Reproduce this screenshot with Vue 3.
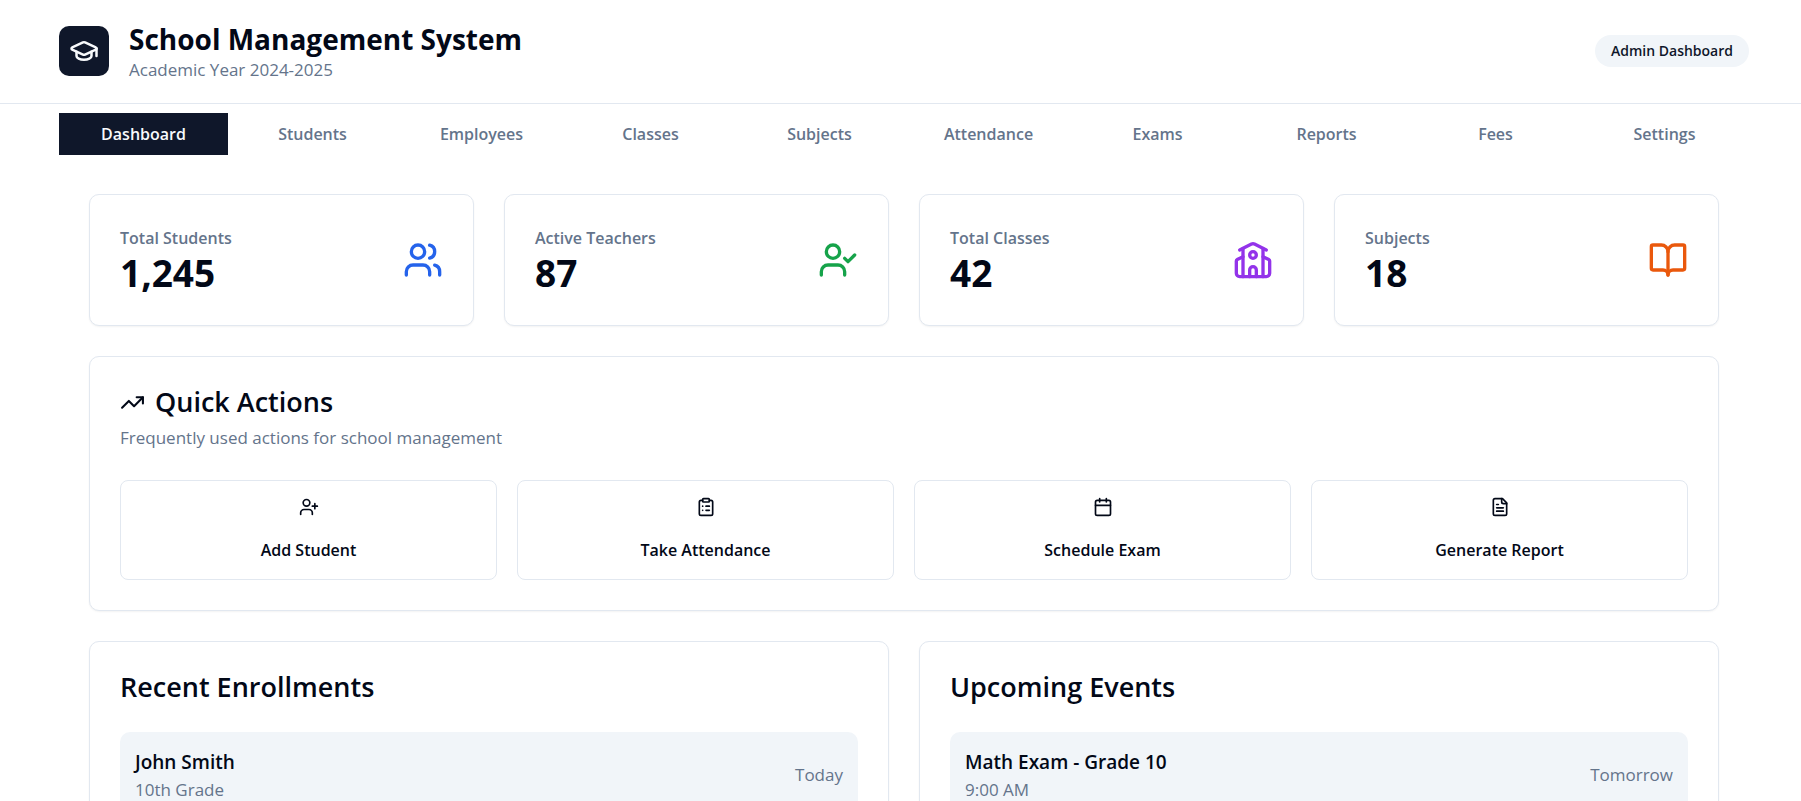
<script setup>
import { ref } from 'vue'

const tabs = ['Dashboard', 'Students', 'Employees', 'Classes', 'Subjects', 'Attendance', 'Exams', 'Reports', 'Fees', 'Settings']
const active = ref('Dashboard')

const person = '<path d="M16 21v-2a4 4 0 0 0-4-4H6a4 4 0 0 0-4 4v2"/><circle cx="9" cy="7" r="4"/>'
const icons = {
  cap: '<path d="M21.42 10.922a1 1 0 0 0-.019-1.838L12.83 5.18a2 2 0 0 0-1.66 0L2.6 9.08a1 1 0 0 0 0 1.832l8.57 3.908a2 2 0 0 0 1.66 0z"/><path d="M22 10v6"/><path d="M6 12.5V16a6 3 0 0 0 12 0v-3.5"/>',
  users: person + '<path d="M22 21v-2a4 4 0 0 0-3-3.87"/><path d="M16 3.13a4 4 0 0 1 0 7.75"/>',
  userCheck: person + '<polyline points="16 11 18 13 22 9"/>',
  userPlus: person + '<path d="M19 8v6"/><path d="M22 11h-6"/>',
  school: '<path d="M14 22v-4a2 2 0 1 0-4 0v4"/><path d="m18 10 3.447 1.724a1 1 0 0 1 .553.894V20a2 2 0 0 1-2 2H4a2 2 0 0 1-2-2v-7.382a1 1 0 0 1 .553-.894L6 10"/><path d="M18 5v17"/><path d="m4 6 7.106-3.553a2 2 0 0 1 1.788 0L20 6"/><path d="M6 5v17"/><circle cx="12" cy="9" r="2"/>',
  book: '<path d="M12 7v14"/><path d="M3 18a1 1 0 0 1-1-1V4a1 1 0 0 1 1-1h5a4 4 0 0 1 4 4 4 4 0 0 1 4-4h5a1 1 0 0 1 1 1v13a1 1 0 0 1-1 1h-6a3 3 0 0 0-3 3 3 3 0 0 0-3-3z"/>',
  trend: '<polyline points="22 7 13.5 15.5 8.5 10.5 2 17"/><polyline points="16 7 22 7 22 13"/>',
  clipboard: '<rect width="8" height="4" x="8" y="2" rx="1" ry="1"/><path d="M16 4h2a2 2 0 0 1 2 2v14a2 2 0 0 1-2 2H6a2 2 0 0 1-2-2V6a2 2 0 0 1 2-2h2"/><path d="M12 11h4"/><path d="M12 16h4"/><path d="M8 11h.01"/><path d="M8 16h.01"/>',
  calendar: '<path d="M8 2v4"/><path d="M16 2v4"/><rect width="18" height="18" x="3" y="4" rx="2"/><path d="M3 10h18"/>',
  file: '<path d="M15 2H6a2 2 0 0 0-2 2v16a2 2 0 0 0 2 2h12a2 2 0 0 0 2-2V7Z"/><path d="M14 2v4a2 2 0 0 0 2 2h4"/><path d="M10 9H8"/><path d="M16 13H8"/><path d="M16 17H8"/>',
}

const stats = [
  { label: 'Total Students', value: '1,245', icon: 'users', tone: 'blue' },
  { label: 'Active Teachers', value: '87', icon: 'userCheck', tone: 'green' },
  { label: 'Total Classes', value: '42', icon: 'school', tone: 'purple' },
  { label: 'Subjects', value: '18', icon: 'book', tone: 'orange' },
]

const actions = [
  { label: 'Add Student', icon: 'userPlus' },
  { label: 'Take Attendance', icon: 'clipboard' },
  { label: 'Schedule Exam', icon: 'calendar' },
  { label: 'Generate Report', icon: 'file' },
]

const lists = [
  { title: 'Recent Enrollments', items: [{ name: 'John Smith', detail: '10th Grade', when: 'Today' }] },
  { title: 'Upcoming Events', items: [{ name: 'Math Exam - Grade 10', detail: '9:00 AM', when: 'Tomorrow' }] },
]
</script>

<template>
  <div class="page">
    <header class="header">
      <div class="brand">
        <div class="logo"><svg class="icon icon-lg" viewBox="0 0 24 24" aria-hidden="true" v-html="icons.cap"></svg></div>
        <div>
          <h1 class="title">School Management System</h1>
          <p class="muted">Academic Year 2024-2025</p>
        </div>
      </div>
      <span class="badge">Admin Dashboard</span>
    </header>

    <nav class="tabs" aria-label="Main">
      <button
        v-for="tab in tabs"
        :key="tab"
        type="button"
        class="tab"
        :class="{ active: tab === active }"
        @click="active = tab"
      >{{ tab }}</button>
    </nav>

    <main class="content">
      <section class="stats">
        <article v-for="s in stats" :key="s.label" class="card stat">
          <div>
            <p class="stat-label">{{ s.label }}</p>
            <p class="stat-value">{{ s.value }}</p>
          </div>
          <svg class="icon icon-xl" :class="s.tone" viewBox="0 0 24 24" aria-hidden="true" v-html="icons[s.icon]"></svg>
        </article>
      </section>

      <section class="card">
        <h2 class="card-title">
          <svg class="icon icon-md" viewBox="0 0 24 24" aria-hidden="true" v-html="icons.trend"></svg>
          Quick Actions
        </h2>
        <p class="muted subtitle">Frequently used actions for school management</p>
        <div class="actions">
          <button v-for="a in actions" :key="a.label" type="button" class="action">
            <svg class="icon icon-sm" viewBox="0 0 24 24" aria-hidden="true" v-html="icons[a.icon]"></svg>
            <span>{{ a.label }}</span>
          </button>
        </div>
      </section>

      <div class="lists">
        <section v-for="l in lists" :key="l.title" class="card">
          <h2 class="card-title">{{ l.title }}</h2>
          <ul class="items">
            <li v-for="i in l.items" :key="i.name" class="item">
              <div>
                <p class="item-name">{{ i.name }}</p>
                <p class="muted">{{ i.detail }}</p>
              </div>
              <span class="muted">{{ i.when }}</span>
            </li>
          </ul>
        </section>
      </div>
    </main>
  </div>
</template>

<style>
body {
  background: #fff;
}
</style>

<style scoped>
.page {
  color: #020817;
  font-family: "Segoe UI", "Open Sans", "Noto Sans", sans-serif;
  font-size: 16px;
  line-height: 26px;
}

h1, h2, p, ul {
  margin: 0;
  padding: 0;
}

button {
  font: inherit;
  cursor: pointer;
}

.icon {
  flex: none;
  fill: none;
  stroke: currentColor;
  stroke-width: 2;
  stroke-linecap: round;
  stroke-linejoin: round;
}
.icon-sm { width: 20px; height: 20px; }
.icon-md { width: 25px; height: 25px; }
.icon-lg { width: 30px; height: 30px; }
.icon-xl { width: 40px; height: 40px; }

.blue { color: #2563eb; }
.green { color: #16a34a; }
.purple { color: #9333ea; }
.orange { color: #ea580c; }

.muted {
  color: #64748b;
  font-size: 17px;
  line-height: 24px;
}

.header {
  display: flex;
  align-items: center;
  justify-content: space-between;
  padding: 20px 52px 21px 59px;
  border-bottom: 1px solid #e2e8f0;
}

.brand {
  display: flex;
  align-items: center;
  gap: 20px;
}

.logo {
  display: flex;
  align-items: center;
  justify-content: center;
  width: 50px;
  height: 50px;
  border-radius: 10px;
  background: #0f172a;
  color: #f8fafc;
}

.title {
  font-size: 28px;
  font-weight: 700;
  line-height: 38px;
}

.badge {
  padding: 4px 16px;
  border-radius: 16px;
  background: #f1f5f9;
  color: #0f172a;
  font-size: 14px;
  font-weight: 600;
  line-height: 24px;
}

.tabs {
  display: grid;
  grid-template-columns: repeat(10, 1fr);
  padding: 9px 52px 9px 59px;
}

.tab {
  padding: 8px;
  border: 0;
  background: transparent;
  color: #64748b;
  font-weight: 600;
}

.tab.active {
  background: #0f172a;
  color: #f8fafc;
}

.content {
  display: grid;
  gap: 30px;
  padding: 30px 82px 30px 89px;
}

.card {
  padding: 30px;
  border: 1px solid #e2e8f0;
  border-radius: 10px;
  background: #fff;
  box-shadow: 0 1px 2px rgba(0, 0, 0, 0.05);
}

.stats {
  display: grid;
  grid-template-columns: repeat(4, 1fr);
  gap: 30px;
}

.stat {
  display: flex;
  align-items: center;
  justify-content: space-between;
}

.stat-label {
  color: #64748b;
  font-weight: 600;
}

.stat-value {
  font-size: 37px;
  font-weight: 700;
  line-height: 44px;
}

.card-title {
  display: flex;
  align-items: center;
  gap: 10px;
  font-size: 27px;
  font-weight: 600;
  line-height: 30px;
}

.subtitle {
  margin-top: 9px;
}

.actions {
  display: grid;
  grid-template-columns: repeat(4, 1fr);
  gap: 20px;
  margin-top: 30px;
}

.action {
  display: flex;
  flex-direction: column;
  align-items: center;
  justify-content: center;
  gap: 20px;
  height: 100px;
  border: 1px solid #e2e8f0;
  border-radius: 8px;
  background: #fff;
  color: #020817;
  font-weight: 600;
}

.lists {
  display: grid;
  grid-template-columns: repeat(2, 1fr);
  gap: 30px;
}

.items {
  display: grid;
  gap: 20px;
  margin-top: 30px;
  list-style: none;
}

.item {
  display: flex;
  align-items: center;
  justify-content: space-between;
  padding: 15px;
  border-radius: 10px;
  background: #f1f5f9;
}

.item-name {
  font-size: 19px;
  font-weight: 600;
  line-height: 31px;
}
</style>
